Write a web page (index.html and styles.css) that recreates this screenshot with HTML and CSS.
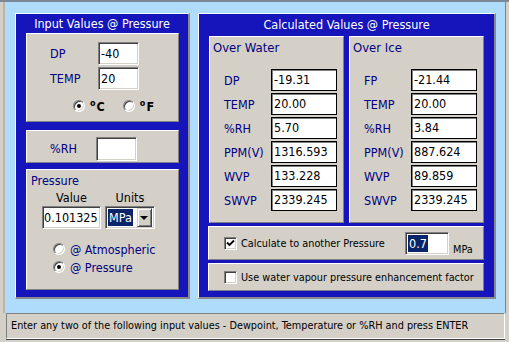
FILE: index.html
```html
<!DOCTYPE html>
<html>
<head>
<meta charset="utf-8">
<link rel="stylesheet" href="styles.css">
</head>
<body>
<div class="win">
  <div class="client">
    <section class="panel panel-left">
      <h2 class="ptitle">Input Values @ Pressure</h2>
      <div class="box box-input">
        <div class="frow"><span class="lbl">DP</span><span class="field">-40</span></div>
        <div class="frow"><span class="lbl">TEMP</span><span class="field">20</span></div>
        <div class="radios">
          <span class="radio on"></span><span class="unit"><sup>o</sup>C</span>
          <span class="radio"></span><span class="unit"><sup>o</sup>F</span>
        </div>
      </div>
      <div class="box box-rh">
        <span class="lbl lbl-rh">%RH</span><span class="field field-rh"></span>
      </div>
      <div class="box box-press">
        <div class="press-title">Pressure</div>
        <div class="pgrid">
          <span class="phead">Value</span>
          <span class="phead">Units</span>
          <span class="field field-val">0.101325</span>
          <span class="select"><span class="sel-text">MPa</span><span class="sel-btn"><span class="tri"></span></span></span>
        </div>
        <div class="pradios">
          <div class="prow"><span class="radio"></span><span class="ptext">@ Atmospheric</span></div>
          <div class="prow"><span class="radio on"></span><span class="ptext">@ Pressure</span></div>
        </div>
      </div>
    </section>

    <section class="panel panel-right">
      <h2 class="ptitle ptitle-r">Calculated Values @ Pressure</h2>
      <div class="cols">
        <div class="box calcbox">
          <div class="ctitle">Over Water</div>
          <div class="crows">
            <div class="crow"><span class="clbl">DP</span><span class="cfield">-19.31</span></div>
            <div class="crow"><span class="clbl">TEMP</span><span class="cfield">20.00</span></div>
            <div class="crow"><span class="clbl">%RH</span><span class="cfield">5.70</span></div>
            <div class="crow"><span class="clbl">PPM(V)</span><span class="cfield">1316.593</span></div>
            <div class="crow"><span class="clbl">WVP</span><span class="cfield">133.228</span></div>
            <div class="crow"><span class="clbl">SWVP</span><span class="cfield">2339.245</span></div>
          </div>
        </div>
        <div class="box calcbox">
          <div class="ctitle">Over Ice</div>
          <div class="crows">
            <div class="crow"><span class="clbl">FP</span><span class="cfield">-21.44</span></div>
            <div class="crow"><span class="clbl">TEMP</span><span class="cfield">20.00</span></div>
            <div class="crow"><span class="clbl">%RH</span><span class="cfield">3.84</span></div>
            <div class="crow"><span class="clbl">PPM(V)</span><span class="cfield">887.624</span></div>
            <div class="crow"><span class="clbl">WVP</span><span class="cfield">89.859</span></div>
            <div class="crow"><span class="clbl">SWVP</span><span class="cfield">2339.245</span></div>
          </div>
        </div>
      </div>
      <div class="box chkbox chkbox-1">
        <span class="check"><svg width="9" height="9" viewBox="0 0 9 9"><path d="M1 3.5 L3.5 6 L8 1.5" fill="none" stroke="#000" stroke-width="1.8"/></svg></span>
        <span class="chktext chktext-1">Calculate to another Pressure</span>
        <span class="field field-p"><span class="hl">0.7</span></span>
        <span class="mpa">MPa</span>
      </div>
      <div class="box chkbox chkbox-2">
        <span class="check"></span>
        <span class="chktext">Use water vapour pressure enhancement factor</span>
      </div>
    </section>
  </div>
  <div class="status">Enter any two of the following input values - Dewpoint, Temperature or %RH and press ENTER</div>
</div>
</body>
</html>
```
FILE: styles.css
```css
* { box-sizing: border-box; }

body {
  margin: 0;
  width: 509px;
  height: 342px;
  overflow: hidden;
  background: #d4d0c8;
  font-family: "DejaVu Sans Condensed", "DejaVu Sans", sans-serif;
  font-size: 12.5px;
  color: #000;
}

.win {
  height: 342px;
  border-top: 2px solid #7c8797;
}

.client {
  margin: 0 3px;
  height: 311px;
  border-left: 2px solid #b9b5ae;
  border-right: 1px solid #808080;
  background: #afdcfa;
  display: flex;
  align-items: flex-start;
  gap: 8px;
  padding: 11px 0 0 10px;
}

.panel {
  background: #1515bb;
  border-style: solid;
  border-width: 1px 2px 2px 1px;
  border-color: #fff #8a8a8a #8a8a8a #fff;
  height: 286px;
}

.panel-left { width: 175px; }
.panel-right { width: 298px; }

.ptitle {
  margin: 0;
  height: 19px;
  line-height: 19px;
  text-align: center;
  color: #fff;
  font-weight: normal;
  font-size: 12.5px;
}

.ptitle-r {
  height: 22px;
  line-height: 22px;
}

.box {
  background: #d4d0c8;
  border: 1px solid;
  border-color: #fff #808080 #808080 #fff;
}

.panel-left .box {
  margin-left: 10px;
  width: 153px;
}

.box-input {
  height: 89px;
  margin-bottom: 8px;
  padding: 8px 0 0 23px;
}

.frow {
  display: flex;
  align-items: center;
  height: 23px;
  margin-bottom: 2px;
}

.lbl {
  width: 48px;
  color: #000080;
}

.field {
  display: block;
  background: #fff;
  border: 1px solid;
  border-color: #808080 #fff #fff #808080;
  box-shadow: inset 1px 1px 0 #404040, inset -1px -1px 0 #d4d0c8;
  padding-left: 2px;
  white-space: nowrap;
  overflow: hidden;
}

.frow .field {
  width: 41px;
  height: 23px;
  line-height: 21px;
}

.radios {
  display: flex;
  align-items: center;
  height: 18px;
  margin: 7px 0 0 23px;
}

.radio {
  position: relative;
  display: inline-block;
  width: 12px;
  height: 12px;
  border-radius: 50%;
  background: #fff;
  border: 1px solid;
  border-color: #808080 #fff #fff #808080;
  box-shadow: inset 1px 1px 0 #404040, inset -1px -1px 0 #d4d0c8;
  flex: none;
}

.radio.on::after {
  content: "";
  position: absolute;
  left: 3px;
  top: 3px;
  width: 4px;
  height: 4px;
  border-radius: 50%;
  background: #000;
}

.unit {
  font-weight: bold;
  font-size: 12.5px;
  margin: 0 18px 0 5px;
}

.unit sup {
  font-size: 9px;
  vertical-align: 5px;
  font-weight: bold;
  margin-right: 1px;
}

.box-rh {
  height: 33px;
  margin-bottom: 6px;
  padding: 4px 0 0 23px;
  display: flex;
  align-items: center;
}

.lbl-rh { width: 46px; }

.field-rh {
  width: 41px;
  height: 24px;
}

.box-press {
  height: 121px;
  padding: 4px 0 0 4px;
}

.press-title {
  color: #000080;
  line-height: 14px;
}

.pgrid {
  display: grid;
  grid-template-columns: 59px 50px;
  grid-template-rows: 15px 23px;
  column-gap: 4px;
  margin: 3px 0 0 11px;
}

.phead {
  text-align: center;
  line-height: 14px;
}

.field-val {
  width: 59px;
  height: 23px;
  line-height: 21px;
  padding-left: 1px;
}

.select {
  display: flex;
  width: 50px;
  height: 23px;
  background: #fff;
  border: 1px solid;
  border-color: #808080 #fff #fff #808080;
  box-shadow: inset 1px 1px 0 #404040, inset -1px -1px 0 #d4d0c8;
  padding: 2px;
}

.sel-text {
  background: #0a246a;
  color: #fff;
  line-height: 17px;
  height: 17px;
  padding: 0 1px;
  margin-right: 4px;
}

.sel-btn {
  margin-left: auto;
  width: 17px;
  height: 19px;
  margin-top: -1px;
  background: #d4d0c8;
  border: 1px solid;
  border-color: #d4d0c8 #404040 #404040 #d4d0c8;
  box-shadow: inset 1px 1px 0 #fff, inset -1px -1px 0 #808080;
  display: flex;
  align-items: center;
  justify-content: center;
}

.tri {
  width: 0;
  height: 0;
  border-left: 4px solid transparent;
  border-right: 4px solid transparent;
  border-top: 4px solid #000;
  margin-top: 1px;
}

.pradios {
  margin: 11px 0 0 22px;
}

.prow {
  display: flex;
  align-items: center;
  height: 18px;
}

.ptext {
  color: #000080;
  margin-left: 5px;
}

.cols {
  display: flex;
  gap: 5px;
  margin-left: 10px;
}

.calcbox {
  width: 135px;
  height: 187px;
  padding: 3px 0 0 3px;
}

.ctitle {
  color: #000080;
  line-height: 16px;
  font-size: 13px;
}

.crows {
  margin: 13px 0 0 11px;
}

.crow {
  display: flex;
  align-items: center;
  height: 22px;
  margin-bottom: 2px;
}

.clbl {
  width: 47px;
  color: #000080;
}

.cfield {
  width: 66px;
  height: 22px;
  line-height: 20px;
  background: #fff;
  border: 1px solid #000;
  box-shadow: inset 1px 1px 0 #808080;
  padding-left: 2px;
  white-space: nowrap;
}

.chkbox {
  margin: 3px 0 0 9px;
  width: 276px;
  display: flex;
  align-items: center;
  padding-left: 15px;
  font-size: 10.8px;
}

.chkbox-1 { height: 34px; }
.chkbox-2 { height: 28px; }

.check {
  width: 13px;
  height: 13px;
  flex: none;
  background: #fff;
  border: 1px solid;
  border-color: #808080 #fff #fff #808080;
  box-shadow: inset 1px 1px 0 #404040, inset -1px -1px 0 #d4d0c8;
  display: flex;
  align-items: center;
  justify-content: center;
}

.check svg { display: block; }

.chktext {
  margin-left: 4px;
  white-space: nowrap;
}

.chktext-1 { width: 164px; }

.field-p {
  width: 44px;
  height: 23px;
  padding: 2px 0 0 2px;
  font-size: 12.5px;
}

.hl {
  display: inline-block;
  background: #0a246a;
  color: #fff;
  line-height: 17px;
  height: 17px;
  padding: 0 1px;
}

.mpa {
  align-self: flex-end;
  margin: 0 0 2px 4px;
  line-height: 14px;
}

.status {
  margin: 0 4px 0 6px;
  height: 26px;
  border: 1px solid;
  border-color: #808080 #fff #fff #808080;
  box-shadow: 0 1px 0 #404040;
  padding-left: 4px;
  line-height: 24px;
  font-size: 10.8px;
  white-space: nowrap;
}
```
